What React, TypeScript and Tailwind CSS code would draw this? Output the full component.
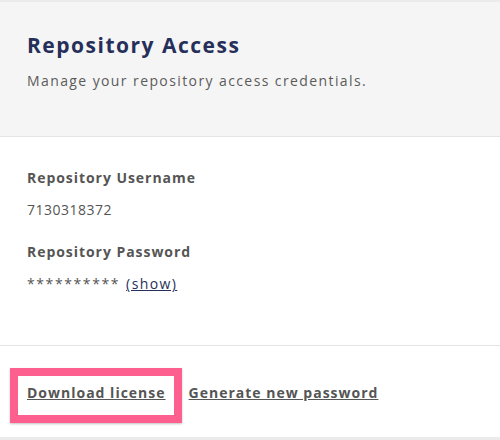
export default function App() {
  return (
    <div className="w-[500px] h-[440px] overflow-hidden bg-[#ebebeb] pt-[2px] font-['Open_Sans',sans-serif]">
      <div className="bg-white">
        {/* Header */}
        <div className="h-[135px] bg-[#f5f5f5] border-b border-[#e4e4e4] px-[27px] pt-[30px]">
          <h2 className="text-[21px] leading-[26px] font-bold text-[#262f59] tracking-[1.5px]">
            Repository Access
          </h2>
          <p className="mt-[13px] text-[14px] leading-[20px] text-[#5b5b5b] tracking-[1.4px]">
            Manage your repository access credentials.
          </p>
        </div>

        {/* Credentials */}
        <div className="h-[208px] px-[27px] pt-[31px] text-[14px] leading-[20px] text-[#555]">
          <div className="font-bold tracking-[0.95px]">Repository Username</div>
          <div className="mt-[12px] tracking-[0.5px]">7130318372</div>
          <div className="mt-[22px] font-bold tracking-[0.95px]">Repository Password</div>
          <div className="mt-[12px] flex gap-[6px]">
            <span className="tracking-[1.6px]">**********</span>
            <a href="#" className="text-[#262f59] underline tracking-[1.4px]">
              (show)
            </a>
          </div>
        </div>

        {/* Actions */}
        <div className="h-[92px] border-t border-[#e4e4e4] pl-[10px] pt-[22px]">
          <div className="flex items-start gap-[7px] text-[14px] leading-[20px] font-bold text-[#555] tracking-[1px]">
            <div className="border-[8px] border-[#fd5f8e] pl-[9px] pr-[8px] pt-[7px] pb-[12px] shadow-[0_1px_2px_rgba(0,0,0,0.25)]">
              <a href="#" className="underline">Download license</a>
            </div>
            <a href="#" className="mt-[15px] underline">Generate new password</a>
          </div>
        </div>
      </div>
    </div>
  );
}
